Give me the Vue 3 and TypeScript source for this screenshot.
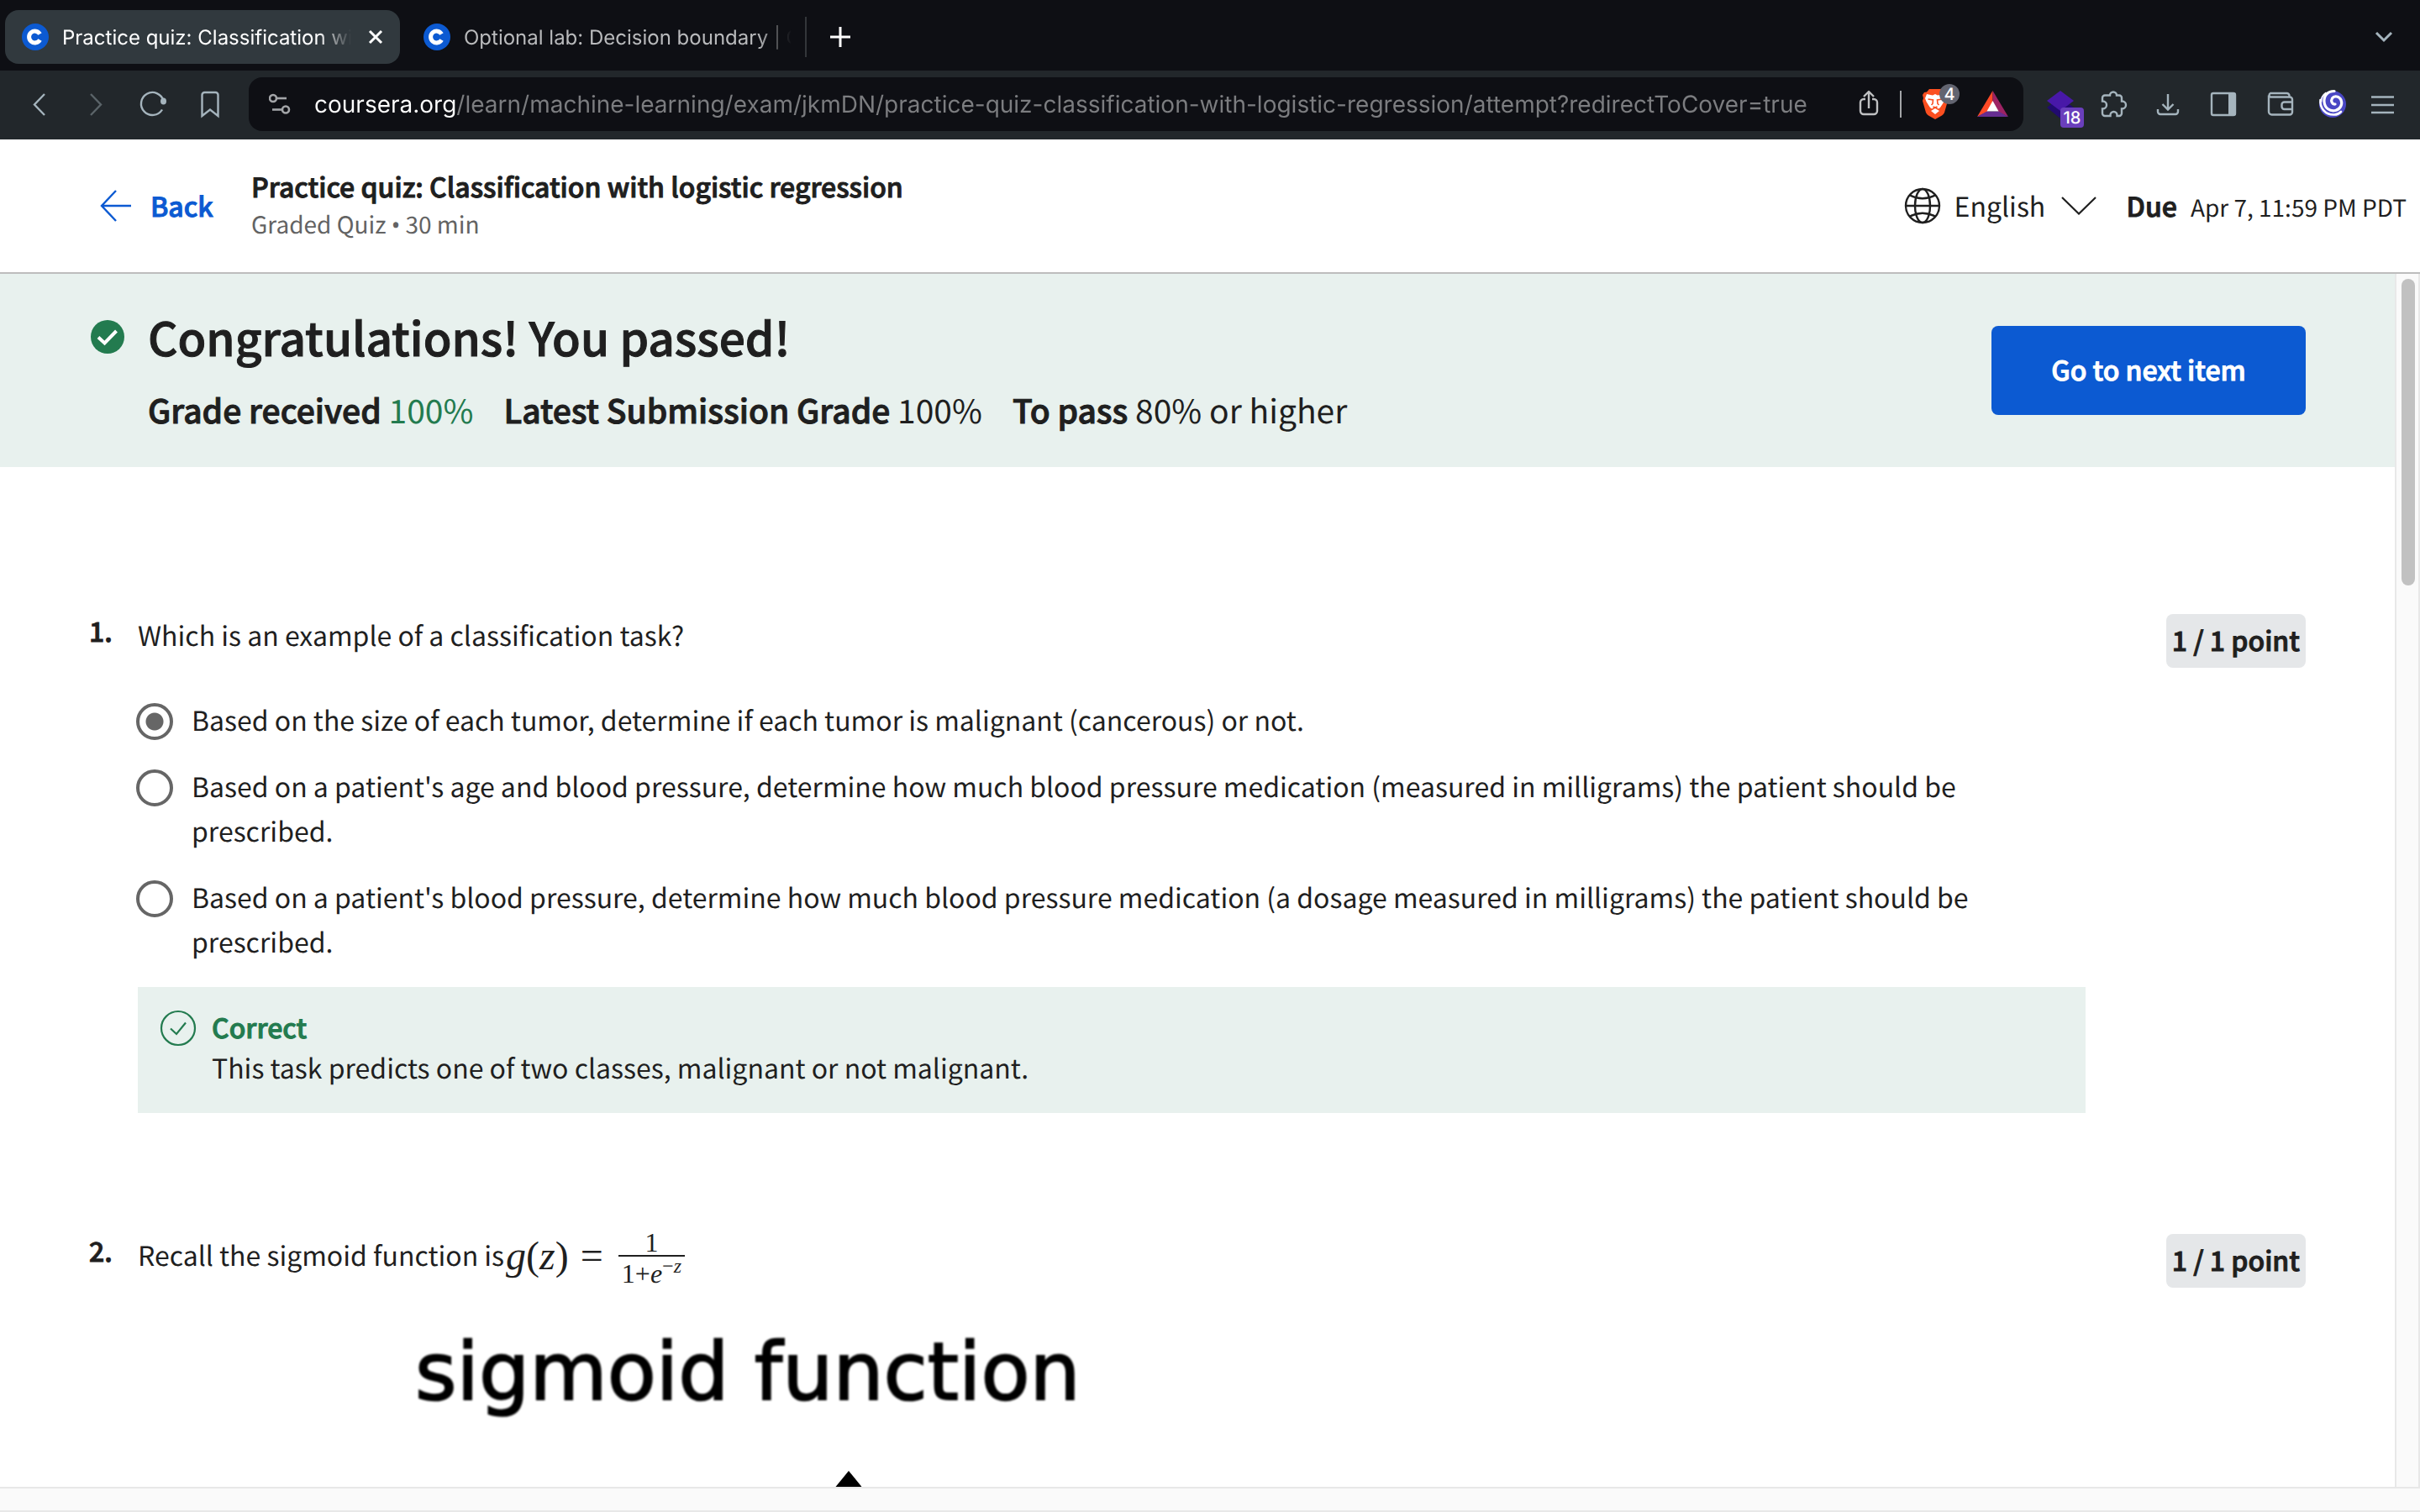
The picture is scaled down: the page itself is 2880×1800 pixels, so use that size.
<script setup lang="ts">
import { ref } from 'vue'

interface Tab {
  title: string
  active: boolean
}

const tabs: Tab[] = [
  { title: 'Practice quiz: Classification wi', active: true },
  { title: 'Optional lab: Decision boundary | C', active: false },
]

const address = ref(
  'coursera.org/learn/machine-learning/exam/jkmDN/practice-quiz-classification-with-logistic-regression/attempt?redirectToCover=true',
)

const options: string[] = [
  'Based on the size of each tumor, determine if each tumor is malignant (cancerous) or not.',
  "Based on a patient's age and blood pressure, determine how much blood pressure medication (measured in milligrams) the patient should be prescribed.",
  "Based on a patient's blood pressure, determine how much blood pressure medication (a dosage measured in milligrams) the patient should be prescribed.",
]
const chosen = ref(0)
const language = ref('English')
</script>

<template>
  <div class="window">
    <div class="tab-strip">
      <div v-for="tab in tabs" :key="tab.title" class="tab" :class="{ active: tab.active }">
        <svg class="favicon" viewBox="0 0 32 32" aria-hidden="true">
          <circle cx="16" cy="16" r="16" fill="#0c5ad2" />
          <path d="M21.5 12.6A6.9 6.9 0 1 0 21.5 19.4" fill="none" stroke="#fff" stroke-width="5" />
        </svg>
        <button class="tab-title" type="button">{{ tab.title }}</button>
        <button v-if="tab.active" class="close" type="button" aria-label="Close tab">
          <svg viewBox="0 0 18 18"><path d="M2 2L16 16M16 2L2 16" stroke="#fff" stroke-width="3" /></svg>
        </button>
      </div>
      <button class="new-tab" type="button" aria-label="New tab">
        <svg viewBox="0 0 24 24"><path d="M12 0V24M0 12H24" stroke="#fff" stroke-width="3" /></svg>
      </button>
      <button class="tab-search" type="button" aria-label="Search tabs">
        <svg viewBox="0 0 22 14"><path d="M2 2L11 11L20 2" fill="none" stroke="#a5b4bd" stroke-width="3" /></svg>
      </button>
    </div>

    <div class="toolbar">
      <div class="nav">
        <button type="button" aria-label="Back">
          <svg viewBox="0 0 68 64"><path d="M41 20L29 32.500L41 45" class="line" /></svg>
        </button>
        <button type="button" aria-label="Forward">
          <svg viewBox="0 0 68 64"><path d="M28 20L40 32.500L28 45" class="line dim" /></svg>
        </button>
        <button type="button" aria-label="Reload">
          <svg viewBox="0 0 68 64">
            <path d="M46.500 28A13.500 13.500 0 1 0 45 38.500" class="line" />
            <ellipse cx="46.500" cy="28.500" rx="3.500" ry="4" fill="#a5b4bd" />
          </svg>
        </button>
        <button type="button" aria-label="Bookmark">
          <svg viewBox="0 0 68 64">
            <path d="M24.500 46V21a3 3 0 0 1 3-3h13a3 3 0 0 1 3 3V46L34 38.500z" class="line" />
          </svg>
        </button>
      </div>

      <div class="address">
        <svg class="site" viewBox="0 0 28 26" aria-hidden="true">
          <g fill="none" stroke="#a3a5a8" stroke-width="2.600">
            <circle cx="5" cy="6" r="4" /><path d="M10 6H21" />
            <circle cx="20" cy="19.500" r="4" /><path d="M4 19.500H15" />
          </g>
        </svg>
        <input v-model="address" type="text" aria-label="Address" spellcheck="false" />
        <div class="actions">
          <button type="button" aria-label="Share">
            <svg viewBox="0 0 64 64">
              <g fill="none" stroke="#bfc0c2" stroke-width="2.400" stroke-linejoin="round">
                <path d="M29 26H27a4 4 0 0 0-4 4V40a4 4 0 0 0 4 4H39a4 4 0 0 0 4-4V30a4 4 0 0 0-4-4H37" />
                <path d="M33 37V17M27 23L33 17L39 23" />
              </g>
            </svg>
          </button>
          <span class="rule"></span>
          <button type="button" aria-label="Brave Shields">
            <svg viewBox="0 0 64 64">
              <path d="M27 14H41L44 17.500L47 18L49 21L48 25L49 28L45 42Q44 44 42 45.500L34 50L26 45.500Q24 44 23 42L19 28L20 25L19 21L21 18L24 17.500z" fill="#fb4f20" />
              <path d="M24 20L31 21.500L34 20L37 21.500L44 20L46 25L44.500 29L42 33L40 36L38 37.500L34 35L30 37.500L28 36L26 33L23.500 29L22 25z" fill="#fff" />
              <path d="M34 37L39 40L34 44L29 40z" fill="#fff" />
              <path d="M25.500 26L31.500 27L31 31.500L29.500 33M42.500 26L36.500 27L37 31.500L38.500 33M31.500 35L34 36L36.500 35" fill="none" stroke="#fb4f20" stroke-width="1.600" />
            </svg>
            <span class="count grey">4</span>
          </button>
          <button type="button" aria-label="Rewards">
            <svg viewBox="0 0 64 64">
              <path d="M32.500 16L14 47L26 41L32.500 29z" fill="#ff4a26" />
              <path d="M32.500 16L51 47L39 41L32.500 29z" fill="#9d2364" />
              <path d="M14 47H51L39.500 40.500H25.500z" fill="#662d91" />
              <path d="M32.500 28L39.500 40.500H25.500z" fill="#fff" />
            </svg>
          </button>
        </div>
      </div>

      <div class="tools">
        <button type="button" aria-label="Extension">
          <svg viewBox="0 0 64 64">
            <path d="M32 24L48 36L32 49L16 36z" fill="#210a70" />
            <path d="M32 16L48 28L32 40L16 28z" fill="#4818a8" />
          </svg>
          <span class="count purple">18</span>
        </button>
        <button type="button" aria-label="Extensions">
          <svg viewBox="0 0 64 64">
            <path d="M27 21.500a4 4 0 0 1 8 0H38a3 3 0 0 1 3 3V28.500h.5a4.500 4.500 0 0 1 0 9H41V43a3 3 0 0 1-3 3H35.500V45a4 4 0 0 0-8 0v1H21a3 3 0 0 1-3-3V37.500h.5a4.500 4.500 0 0 0 0-9H18V24.500a3 3 0 0 1 3-3z" class="line" />
          </svg>
        </button>
        <button type="button" aria-label="Downloads">
          <svg viewBox="0 0 64 64">
            <path d="M32 20V38M25.500 32L32 38.500L38.500 32M20 38V41a3 3 0 0 0 3 3H41a3 3 0 0 0 3-3V38" class="line" />
          </svg>
        </button>
        <button type="button" aria-label="Sidebar">
          <svg viewBox="0 0 64 64">
            <rect x="20" y="19" width="28" height="26" rx="2" class="line" />
            <rect x="40" y="19" width="8.500" height="26" fill="#a5b4bd" />
          </svg>
        </button>
        <button type="button" aria-label="Wallet">
          <svg viewBox="0 0 64 64">
            <path d="M24 21.500V41a3.500 3.500 0 0 0 3.500 3.500H49a3 3 0 0 0 3-3V26.500a3 3 0 0 0-3-3H26a2.500 2.500 0 0 1 0-4.500H45.500a3 3 0 0 1 3 3V23M52 29.500H42.500a3 3 0 0 0-3 3V35a3 3 0 0 0 3 3H52" class="line" />
          </svg>
        </button>
        <button type="button" aria-label="Profile">
          <svg viewBox="0 0 64 64">
            <circle cx="36" cy="32" r="16" fill="#4a47c4" />
            <g fill="none" stroke="#fff" stroke-linecap="round">
              <path d="M38 16.500C30 16.500 25.500 22 26 29C26.500 37 33 41 39.500 39.500C45.500 38 48 32 46 27C44 22.500 38 21.500 35.500 25C33.500 28.500 35.500 32.500 39 32" stroke-width="3.200" />
              <path d="M21.500 27C20.500 36 27 45 38 44.500C41 44.500 44 43 46 41" stroke-width="2.600" />
              <path d="M28 18.500C24.500 21 22.500 25 22.500 29" stroke-width="1.600" />
            </g>
          </svg>
        </button>
        <button type="button" aria-label="Menu">
          <svg viewBox="0 0 64 64"><path d="M18 23.500H45M18 33H45M18 42H45" class="line" /></svg>
        </button>
      </div>
    </div>

    <header class="quiz-header">
      <a class="back" href="#">
        <svg viewBox="0 0 38 38" aria-hidden="true">
          <path d="M19 1L2 19L19 37M2 19H37" fill="none" stroke="#0c5ad2" stroke-width="2.400" />
        </svg>
        Back
      </a>
      <div class="heading">
        <h1>Practice quiz: Classification with logistic regression</h1>
        <p>Graded Quiz <span class="bullet">•</span> 30 min</p>
      </div>
      <label class="language">
        <svg class="globe" viewBox="0 0 44 44" aria-hidden="true">
          <g fill="none" stroke="#1f1f1f" stroke-width="2.400">
            <circle cx="22" cy="22" r="20" />
            <ellipse cx="22" cy="22" rx="9" ry="20" />
            <path d="M2 22H42M7 9.500Q22 17 37 9.500M7 34.500Q22 27 37 34.500" />
          </g>
        </svg>
        <select v-model="language" aria-label="Language">
          <option>English</option>
        </select>
        <svg class="chevron" viewBox="0 0 42 22" aria-hidden="true">
          <path d="M1 1L21 20.500L41 1" fill="none" stroke="#1f1f1f" stroke-width="2.200" />
        </svg>
      </label>
      <div class="due"><strong>Due</strong><span>Apr 7, 11:59 PM PDT</span></div>
    </header>

    <div class="viewport">
      <main class="page">
        <section class="banner">
          <svg class="passed" viewBox="0 0 40 40" aria-hidden="true">
            <circle cx="20" cy="20" r="20" fill="#237b4f" />
            <path d="M9 20.500L16.500 27.500L30.500 13" fill="none" stroke="#fff" stroke-width="4" />
          </svg>
          <div class="result">
            <h2>Congratulations! You passed!</h2>
            <p class="grades">
              <span><strong>Grade received</strong> <em>100%</em></span>
              <span><strong>Latest Submission Grade</strong> 100%</span>
              <span><strong>To pass</strong> 80% or higher</span>
            </p>
          </div>
          <button class="next" type="button">Go to next item</button>
        </section>

        <section class="questions">
          <article class="question">
            <span class="number">1.</span>
            <div class="body">
              <p class="prompt">Which is an example of a classification task?</p>
              <div class="options">
                <label v-for="(option, index) in options" :key="index" class="option">
                  <input v-model="chosen" type="radio" name="question-1" :value="index" />
                  <span>{{ option }}</span>
                </label>
              </div>
              <div class="feedback">
                <svg viewBox="0 0 44 44" aria-hidden="true">
                  <g fill="none" stroke="#237b4f" stroke-width="2.200">
                    <circle cx="22" cy="22" r="20" />
                    <path d="M13 22.500L20 29L31 15.500" />
                  </g>
                </svg>
                <div>
                  <p class="verdict">Correct</p>
                  <p>This task predicts one of two classes, malignant or not malignant.</p>
                </div>
              </div>
            </div>
            <span class="points">1 / 1 point</span>
          </article>

          <article class="question">
            <span class="number">2.</span>
            <div class="body">
              <div class="prompt formula-line">
                <span>Recall the sigmoid function is</span>
                <span class="formula">
                  <span class="call"><i>g</i>(<i>z</i>)</span>
                  <span class="equals">=</span>
                  <span class="fraction">
                    <span class="top">1</span>
                    <span class="bottom">1+<i>e</i><sup>−<i>z</i></sup></span>
                  </span>
                </span>
              </div>
              <figure class="plot">
                <figcaption>sigmoid function</figcaption>
                <svg viewBox="0 0 44 27" aria-hidden="true"><path d="M22 0L44 27H0z" /></svg>
              </figure>
            </div>
            <span class="points">1 / 1 point</span>
          </article>
        </section>
      </main>
      <div class="scroll-y"><span class="thumb"></span></div>
      <div class="scroll-x"></div>
    </div>
  </div>
</template>

<style>
html,
body {
  margin: 0;
  background: #fff;
}
</style>

<style scoped>
.window {
  display: flex;
  flex-direction: column;
  height: 100vh;
  overflow: hidden;
  background: #fff;
  color: #1f1f1f;
  font-family: "Noto Sans CJK SC", "Noto Sans", sans-serif;
  font-size: 32px;
  text-rendering: geometricPrecision;
}
* {
  box-sizing: border-box;
}
h1,
h2,
p,
figure {
  margin: 0;
}
/* Semibold: the medium cut with a thin outline in the text's own colour */
h1,
h2,
strong,
.back,
.next,
.number,
.points,
.verdict {
  font-weight: 500;
  -webkit-text-stroke: 1px currentColor;
}
button,
input,
select {
  margin: 0;
  padding: 0;
  border: 0;
  background: none;
  color: inherit;
  font: inherit;
  text-rendering: inherit;
}
svg {
  display: block;
  flex: none;
}
.line {
  fill: none;
  stroke: #a5b4bd;
  stroke-width: 2.400;
}
.dim {
  stroke: #5b6469;
}

/* Browser tabs */
.tab-strip {
  display: flex;
  flex: none;
  align-items: center;
  height: 84px;
  padding: 4px 32px 0 6px;
  background: #0e0f14;
  font-family: Inter, "Liberation Sans", sans-serif;
  font-size: 24px;
  color: #b9babc;
}
.tab {
  display: flex;
  align-items: center;
  width: 470px;
  height: 64px;
  padding: 0 20px;
  border-radius: 16px;
}
.tab + .tab {
  width: 482px;
  height: 48px;
  margin-left: 2px;
  padding: 0 16px 0 26px;
  border-right: 2px solid #33363a;
  border-radius: 0;
}
.tab.active {
  background: #31393e;
  color: #fff;
}
.favicon {
  width: 32px;
  height: 32px;
}
.tab-title {
  flex: 1;
  min-width: 0;
  margin-left: 16px;
  overflow: hidden;
  text-align: left;
  white-space: nowrap;
  mask-image: linear-gradient(90deg, #000 calc(100% - 40px), transparent);
}
.close {
  margin: 0 0 0 20px;
}
.close svg {
  width: 18px;
  height: 18px;
}
.new-tab {
  margin-left: 28px;
}
.new-tab svg {
  width: 24px;
  height: 24px;
}
.tab-search {
  margin-left: auto;
}
.tab-search svg {
  width: 22px;
  height: 14px;
}

/* Browser toolbar */
.toolbar {
  display: flex;
  flex: none;
  height: 82px;
  padding: 8px 12px 10px;
  background: #22272b;
  font-family: Inter, "Liberation Sans", sans-serif;
}
.nav,
.tools,
.actions {
  display: flex;
  flex: none;
  align-items: center;
}
.nav button,
.tools button,
.actions button {
  position: relative;
}
.nav svg {
  width: 68px;
  height: 64px;
}
.tools svg,
.actions svg {
  width: 64px;
  height: 64px;
}
.address {
  display: flex;
  flex: 1;
  align-items: center;
  min-width: 0;
  margin: 0 12px;
  padding: 0 5px 0 24px;
  border-radius: 16px;
  background: #0e0f14;
}
.site {
  width: 28px;
  height: 26px;
  margin-right: 26px;
}
.address input {
  flex: 1;
  min-width: 0;
  height: 64px;
  outline: 0;
  font-size: 28px;
  color: #7c7d80;
  background: linear-gradient(90deg, #fff 168px, #7c7d80 168px);
  background-clip: text;
  -webkit-text-fill-color: transparent;
}
.actions {
  gap: 6px;
}
.rule {
  width: 2px;
  height: 32px;
  background: #a3a5a8;
}
.count {
  position: absolute;
  display: flex;
  align-items: center;
  justify-content: center;
  height: 24px;
  color: #fff;
  font-size: 20px;
  font-weight: 500;
  line-height: 24px;
}
.grey {
  top: 8px;
  left: 39px;
  width: 24px;
  border-radius: 12px;
  background: #626470;
}
.purple {
  top: 36px;
  left: 32px;
  width: 28px;
  border-radius: 4px;
  background: #6a3fbc;
}

/* Quiz header */
.quiz-header {
  display: flex;
  flex: none;
  align-items: center;
  height: 160px;
  padding: 0 16px 0 119px;
  border-bottom: 2px solid #bdbdbd;
}
.back {
  display: flex;
  align-items: center;
  gap: 22px;
  width: 180px;
  color: #0c5ad2;
  text-decoration: none;
}
.back svg {
  width: 38px;
  height: 38px;
}
.heading {
  flex: 1;
  padding-bottom: 2px;
}
.heading h1 {
  font-size: 32px;
  line-height: 46px;
}
.heading p {
  color: #636363;
  font-size: 28px;
  line-height: 44px;
}
.bullet {
  font-family: "Noto Sans", sans-serif;
  line-height: 1;
}
.language {
  display: flex;
  align-items: center;
}
.globe {
  width: 44px;
  height: 44px;
  margin-right: 16px;
}
.language select {
  appearance: none;
  font-size: 32px;
}
.chevron {
  width: 42px;
  height: 22px;
  margin-left: 18px;
}
.due {
  display: flex;
  align-items: baseline;
  gap: 16px;
  margin-left: 36px;
}
.due span {
  font-size: 28px;
}

/* Scrolling area */
.viewport {
  display: grid;
  flex: 1;
  grid-template-columns: minmax(0, 1fr) 30px;
  grid-template-rows: minmax(0, 1fr) 30px;
  min-height: 0;
  background: #fafafa;
}
.page {
  overflow: hidden;
  background: #fff;
}
.scroll-y {
  padding: 6px 4px;
  border: solid #e8e8e8;
  border-width: 0 2px;
}
.thumb {
  display: block;
  width: 16px;
  height: 365px;
  margin-left: 2px;
  border-radius: 8px;
  background: #c1c1c1;
}
.scroll-x {
  grid-column: 1 / 3;
  border: solid #e8e8e8;
  border-width: 2px 0;
}

/* Result banner */
.banner {
  display: flex;
  align-items: flex-start;
  padding: 38px 106px 36px 108px;
  background: #e8f1ee;
}
.passed {
  width: 40px;
  height: 40px;
  margin-top: 17px;
}
.result {
  flex: 1;
  margin-left: 28px;
}
.result h2 {
  font-size: 55px;
  line-height: 72px;
}
.grades {
  display: flex;
  gap: 36px;
  padding-top: 20px;
  font-size: 39px;
  line-height: 64px;
}
.grades em {
  color: #237b4f;
  font-style: normal;
}
.next {
  width: 374px;
  height: 106px;
  margin-top: 24px;
  padding-bottom: 3px;
  border-radius: 8px;
  background: #0c5ad2;
  color: #fff;
}

/* Questions */
.questions {
  padding: 169px 106px 0;
}
.question {
  display: flex;
  align-items: flex-start;
  margin-bottom: 138px;
  line-height: 53px;
}
.number {
  width: 58px;
}
.body {
  flex: 1;
  min-width: 0;
  padding-top: 5px;
}
.points {
  margin: 6px 0 0 96px;
  padding: 0 7px 2px;
  border-radius: 8px;
  background: #e5e7e9;
  line-height: 62px;
}
.options {
  display: flex;
  flex-direction: column;
  gap: 26px;
  margin: 48px 0 27px -2px;
}
.option {
  display: flex;
  align-items: flex-start;
  gap: 22px;
  padding-right: 100px;
}
.option input {
  appearance: none;
  flex: none;
  width: 44px;
  height: 44px;
  margin-top: 6px;
  padding: 7px;
  border: 4px solid #666;
  border-radius: 50%;
}
.option input:checked {
  background: radial-gradient(circle, #666 10px, transparent 11px);
}
.feedback {
  display: flex;
  gap: 18px;
  padding: 24px 26px 30px;
  background: #e8f1ee;
  line-height: 48px;
}
.feedback svg {
  width: 44px;
  height: 44px;
  margin-top: 3px;
}
.verdict {
  color: #237b4f;
}

.formula-line {
  display: flex;
  align-items: center;
  gap: 2px;
  height: 53px;
}
.formula {
  display: flex;
  align-items: center;
  padding-top: 2px;
  font-family: "Liberation Serif", serif;
}
.call,
.equals {
  font-size: 48px;
}
.equals {
  margin: 0 18px 0 14px;
}
.fraction {
  display: flex;
  flex-direction: column;
  align-items: center;
  padding-top: 4px;
  font-size: 32px;
}
.top {
  line-height: 30px;
}
.bottom {
  padding: 0 4px;
  border-top: 2px solid #1f1f1f;
  line-height: 32px;
}
.bottom sup {
  font-size: 24px;
  line-height: 1;
}
.plot {
  margin: 57px 0 0 330px;
  color: #000;
  font-family: "DejaVu Sans", sans-serif;
  font-size: 95px;
  line-height: 112px;
}
.plot figcaption {
  -webkit-text-stroke: 2px currentColor;
  filter: blur(1px);
}
.plot svg {
  width: 44px;
  height: 27px;
  margin: 61px 0 0 494px;
}
</style>
